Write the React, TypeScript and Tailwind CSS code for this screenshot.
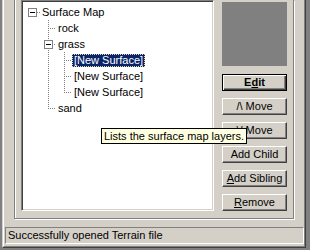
import React from "react";

type Node = { label: string; level: number; selected?: boolean };

const nodes: Node[] = [
  { label: "Surface Map", level: 0 },
  { label: "rock", level: 1 },
  { label: "grass", level: 1 },
  { label: "[New Surface]", level: 2, selected: true },
  { label: "[New Surface]", level: 2 },
  { label: "[New Surface]", level: 2 },
  { label: "sand", level: 1 },
];

const indent: Record<number, string> = {
  0: "pl-[17px]",
  1: "pl-[33px]",
  2: "pl-[49px]",
};

// dotted tree connector, one pixel on / one off
function dotsV(x: number, y1: number, y2: number) {
  const out = [];
  for (let y = y1; y <= y2; y += 2) out.push(<rect key={`v${x}-${y}`} x={x} y={y} width={1} height={1} />);
  return out;
}
function dotsH(y: number, x1: number, x2: number) {
  const out = [];
  for (let x = x1; x <= x2; x += 2) out.push(<rect key={`h${y}-${x}`} x={x} y={y} width={1} height={1} />);
  return out;
}

function MinusBox({ cx, cy }: { cx: number; cy: number }) {
  return (
    <g>
      <rect x={cx - 3.5} y={cy - 3.5} width={8} height={8} fill="#fff" stroke="#808080" strokeWidth={1} transform="translate(-0.5,-0.5)" />
      <rect x={cx - 2} y={cy} width={5} height={1} fill="#000" transform="translate(-0.5,-0.5)" />
    </g>
  );
}

function TreeLines() {
  return (
    <svg className="absolute left-0 top-0" width={189} height={120} shapeRendering="crispEdges">
      <g fill="#808080">
        {dotsH(10, 14, 17)}
        {dotsV(25, 18, 106)}
        {dotsH(26, 27, 32)}
        {dotsH(106, 27, 32)}
        {dotsH(42, 31, 32)}
        {dotsV(41, 50, 90)}
        {dotsH(58, 43, 48)}
        {dotsH(74, 43, 48)}
        {dotsH(90, 43, 48)}
      </g>
      <MinusBox cx={9.5} cy={10.5} />
      <MinusBox cx={25.5} cy={42.5} />
    </svg>
  );
}

function Button({ children, isDefault = false }: { children: React.ReactNode; isDefault?: boolean }) {
  const cls = isDefault
    ? "border border-black shadow-[inset_1px_1px_0_#fff,inset_-1px_-1px_0_#404040,inset_-2px_-2px_0_#808080] font-bold"
    : "border border-t-white border-l-white border-r-[#404040] border-b-[#404040] shadow-[inset_-1px_-1px_0_#808080]";
  return (
    <div className={`h-[17px] w-full flex items-center justify-center leading-none bg-[#d4d0c8] ${cls}`}>
      <span className="whitespace-pre">{children}</span>
    </div>
  );
}

export default function App() {
  return (
    <div className="relative w-[310px] h-[250px] overflow-hidden bg-[#808080] text-[11px] text-black font-['Liberation_Sans',Arial,sans-serif]">
      <div className="ml-[2px] w-[304px] h-[248px] bg-[#d4d0c8] border-l border-r border-b border-l-[#d4d0c8] border-r-[#404040] border-b-[#404040]">
        <div className="h-full flex flex-col border-l border-r border-b border-l-white border-r-[#808080] border-b-[#808080]">
          {/* group box */}
          <div className="ml-[10px] w-[280px] h-[219px] flex gap-[8px] pl-[6px] pr-[6px] border-l border-r border-b border-[#808080] shadow-[inset_1px_0_0_#fff,1px_1px_0_#fff]">
            <div className="relative w-[193px] h-[211px] bg-white border border-t-[#808080] border-l-[#808080] border-r-white border-b-white shadow-[inset_1px_1px_0_#404040,inset_-1px_-1px_0_#d4d0c8]">
              <div className="relative ml-[1px] mt-[1px] pt-[2px]">
                <TreeLines />
                {nodes.map((n, i) => (
                  <div key={i} className={`relative h-4 flex items-center ${indent[n.level]}`}>
                    <span
                      className={`h-[13px] px-[1px] border leading-[11px] whitespace-nowrap ${
                        n.selected ? "bg-[#0a246a] text-white border-dotted border-[#e8dc9c]" : "border-transparent"
                      }`}
                    >
                      {n.label}
                    </span>
                  </div>
                ))}
              </div>
            </div>
            <div className="w-[65px] pt-[2px] flex flex-col">
              <div className="h-[64px] w-full bg-[#808080]" />
              <div className="mt-[8px] flex flex-col gap-[7px]">
                <Button isDefault>
                  E<u className="underline-offset-1">d</u>it
                </Button>
                <Button>{"/\\ Move"}</Button>
                <Button>{"\\/ Move"}</Button>
                <Button>Add Child</Button>
                <Button>
                  <u className="underline-offset-1">A</u>dd Sibling
                </Button>
                <Button>
                  <u className="underline-offset-1">R</u>emove
                </Button>
              </div>
            </div>
          </div>
          {/* status bar */}
          <div className="mt-[8px] ml-[1px] h-[17px] flex items-center pl-[2px] border border-t-[#808080] border-l-[#808080] border-r-white border-b-white whitespace-nowrap">
            Successfully opened Terrain file
          </div>
        </div>
      </div>
      {/* tooltip */}
      <div className="absolute left-[101px] top-[128px] h-[16px] px-[2px] flex items-center bg-[#ffffe1] border border-black whitespace-nowrap leading-none">
        Lists the surface map layers.
      </div>
    </div>
  );
}
